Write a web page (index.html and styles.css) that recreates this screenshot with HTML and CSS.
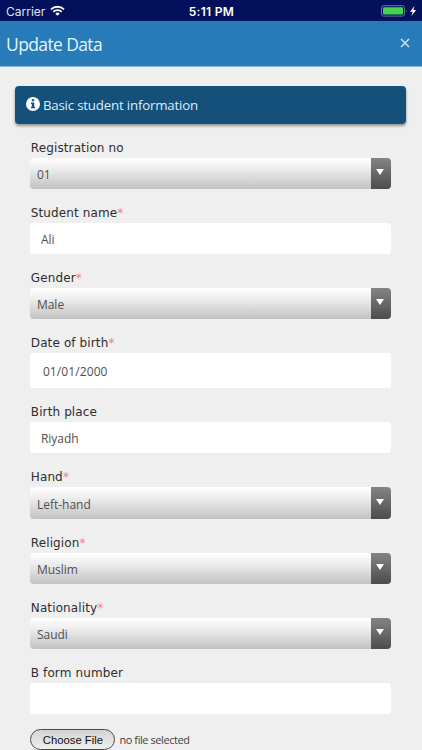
FILE: index.html
```html
<!DOCTYPE html>
<html lang="en">
<head>
  <meta charset="UTF-8">
  <meta name="viewport" content="width=device-width, initial-scale=1">
  <title>Update Data</title>
  <link rel="stylesheet" href="styles.css">
</head>
<body>

  <div class="statusbar">
    <div class="carrier">
      <span>Carrier</span>
      <svg viewBox="0 0 14 11" width="15" height="11.5">
        <path d="M0.8 4.2a8.8 8.8 0 0 1 12.4 0M3 6.5a5.7 5.7 0 0 1 8 0" fill="none" stroke="#fff" stroke-width="1.8"/>
        <path d="M7 10.4L4.9 8.3a3 3 0 0 1 4.2 0z" fill="#fff"/>
      </svg>
    </div>
    <div class="clock">5:11 PM</div>
    <div class="power">
      <svg viewBox="0 0 36 12" width="36" height="12">
        <rect x="0.5" y="0.7" width="23" height="10.4" rx="2" fill="none" stroke="#6f759b"/>
        <rect x="2" y="2.2" width="20" height="7.4" rx="1" fill="#43d551"/>
        <path d="M25 4.2q1.4 1.7 0 3.4z" fill="#6f759b"/>
        <path d="M33.5 1L29 6.7h2.6L30.5 11l4.6-6h-2.7z" fill="#fff"/>
      </svg>
    </div>
  </div>

  <div class="header">
    <h2>Update Data</h2>
    <svg class="close" viewBox="0 0 10 10" width="10" height="10">
      <path d="M1 1l8 8M9 1L1 9" stroke="#c9e3f5" stroke-width="1.5"/>
    </svg>
  </div>

  <div class="section-title">
    <svg class="info" viewBox="0 0 14 14" width="14" height="14">
      <circle cx="7" cy="7" r="7" fill="#fff"/>
      <path d="M5.8 2.2h2.4v2H5.8zM5 5.5h3.2v4.2H9v1.5H5V9.7h.8V7H5z" fill="#15507b"/>
    </svg>
    <span>Basic student information</span>
  </div>

  <form class="form">
    <div class="field">
      <label for="regNo">Registration no</label>
      <div class="select">
        <select id="regNo"><option>01</option></select>
        <span class="arrow"></span>
      </div>
    </div>

    <div class="field">
      <label for="studentName">Student name<span class="required">*</span></label>
      <input type="text" id="studentName" value="Ali">
    </div>

    <div class="field">
      <label for="gender">Gender<span class="required">*</span></label>
      <div class="select">
        <select id="gender"><option>Male</option></select>
        <span class="arrow"></span>
      </div>
    </div>

    <div class="field">
      <label for="birthDate">Date of birth<span class="required">*</span></label>
      <input type="text" id="birthDate" class="date" value="01/01/2000">
    </div>

    <div class="field">
      <label for="birthPlace">Birth place</label>
      <input type="text" id="birthPlace" value="Riyadh">
    </div>

    <div class="field">
      <label for="hand">Hand<span class="required">*</span></label>
      <div class="select">
        <select id="hand"><option>Left-hand</option></select>
        <span class="arrow"></span>
      </div>
    </div>

    <div class="field">
      <label for="religion">Religion<span class="required">*</span></label>
      <div class="select">
        <select id="religion"><option>Muslim</option></select>
        <span class="arrow"></span>
      </div>
    </div>

    <div class="field">
      <label for="nationality">Nationality<span class="required">*</span></label>
      <div class="select">
        <select id="nationality"><option>Saudi</option></select>
        <span class="arrow"></span>
      </div>
    </div>

    <div class="field">
      <label for="bForm">B form number</label>
      <input type="text" id="bForm">
    </div>

    <div class="file">
      <button type="button">Choose File</button>
      <span class="file-name">no file selected</span>
    </div>
  </form>

</body>
</html>
```

FILE: styles.css
```css
* {
  box-sizing: border-box;
}
body {
  margin: 0;
  height: 750px;
  overflow: hidden;
  background-color: #efefef;
  font-family: "Open Sans", sans-serif;
}
.statusbar {
  display: grid;
  grid-template-columns: 1fr auto 1fr;
  align-items: center;
  height: 21px;
  padding: 1px 5px 0 6px;
  background-color: #03115c;
  color: #fff;
  font-family: Inter, sans-serif;
  font-size: 12px;
}
.carrier {
  display: flex;
  align-items: center;
  gap: 5px;
  color: #dfe2ef;
}
.clock {
  font-weight: 600;
  letter-spacing: 0.3px;
}
.power {
  display: flex;
  justify-content: flex-end;
}
.header {
  display: flex;
  align-items: center;
  justify-content: space-between;
  height: 46px;
  padding: 0 12px 0 6px;
  background-color: #287bb9;
  border-bottom: 1px solid #8db5d3;
  color: #e4f4ff;
}
.header h2 {
  margin: 0;
  font-size: 17.5px;
  font-weight: 400;
  letter-spacing: -0.62px;
}
.close {
  margin-bottom: 2px;
}
.section-title {
  display: flex;
  align-items: center;
  gap: 3px;
  height: 38px;
  margin: 19px 16px 0 15.4px;
  padding: 0 10.5px;
  background-color: #15507b;
  border-radius: 4px;
  box-shadow: 0 2px 3px rgba(0, 0, 0, 0.4);
  color: #d9edfb;
  font-size: 13.3px;
  letter-spacing: -0.2px;
}
.info {
  margin-bottom: 2px;
}
.form {
  padding: 13.5px 30.6px 0 30.4px;
}
.field {
  margin-bottom: 14px;
}
label {
  display: block;
  height: 20px;
  padding-left: 0.4px;
  line-height: 20.6px;
  color: #2e2e2e;
  font-family: "DejaVu Sans", Verdana, sans-serif;
  font-size: 12px;
  letter-spacing: 0.12px;
}
.required {
  color: #ed8585;
}
input, select {
  display: block;
  width: 100%;
  height: 31.2px;
  margin: 0;
  border: none;
  border-radius: 3px;
  color: #505050;
  font-family: "Open Sans", sans-serif;
  font-size: 12px;
}
input {
  padding: 2px 10.5px 0;
  background-color: #fff;
}
input.date {
  height: 35.2px;
  padding-left: 12.5px;
  letter-spacing: 0.1px;
}
.select {
  display: flex;
  height: 31.2px;
  overflow: hidden;
  border-radius: 4px;
  background: linear-gradient(#fff, #f0f0f0 30%, #c2c2c2);
}
select {
  flex: 1;
  padding: 2px 6.5px 0;
  appearance: none;
  background: none;
}
.arrow {
  display: flex;
  align-items: center;
  justify-content: center;
  width: 20px;
  padding: 0 2px 2px 0;
  background: linear-gradient(#848484, #4c4c4c);
}
.arrow::before {
  content: "";
  border: 4px solid transparent;
  border-top: 6px solid #fff;
  border-bottom: none;
}
.file {
  display: flex;
  align-items: center;
  gap: 4px;
  padding-top: 1px;
  color: #444;
  font-size: 11px;
}
.file-name {
  letter-spacing: -0.42px;
}
.file button {
  width: 85px;
  height: 21px;
  padding: 0;
  border: 1.5px solid #4a4a4a;
  border-radius: 11px;
  background: linear-gradient(#d2d2d2, #f0f0f0);
  color: #111;
  font-family: "Liberation Sans", Arial, sans-serif;
  font-size: 11.3px;
}
```
